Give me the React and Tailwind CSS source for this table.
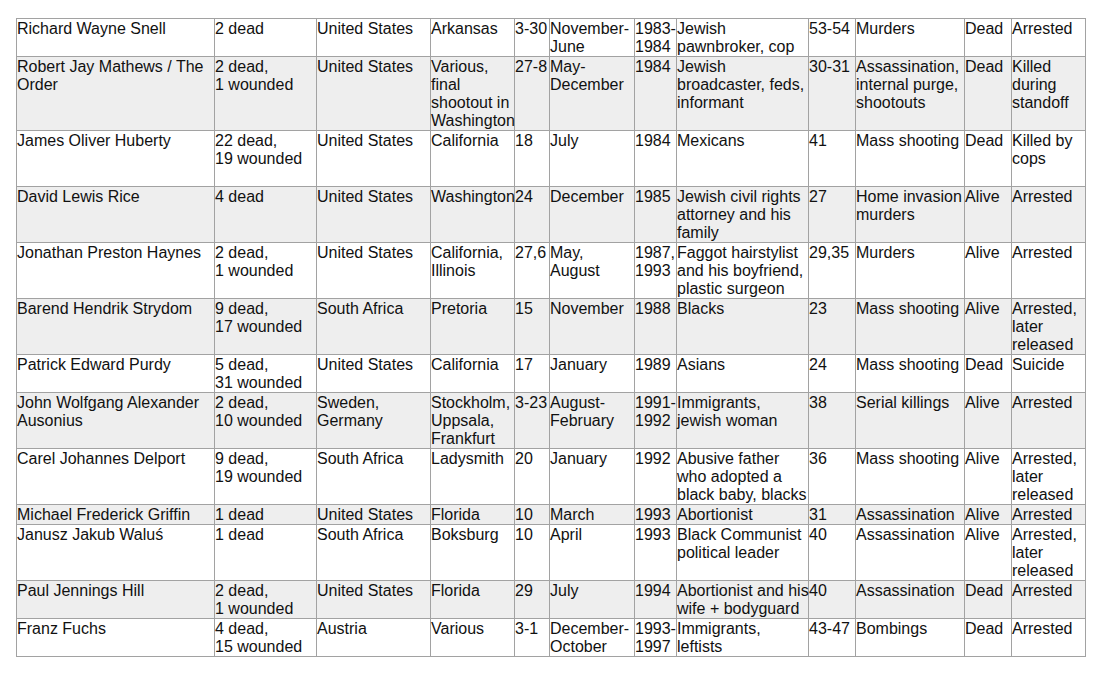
const widths = [198, 102, 114, 84, 35, 85, 42, 132, 47, 109, 47, 74];

const rows = [
  { h: 38, cells: ["Richard Wayne Snell", "2 dead", "United States", "Arkansas", "3-30", "November-|June", "1983-|1984", "Jewish|pawnbroker, cop", "53-54", "Murders", "Dead", "Arrested"] },
  { h: 74, cells: ["Robert Jay Mathews / The|Order", "2 dead,|1 wounded", "United States", "Various,|final|shootout in|Washington", "27-8", "May-|December", "1984", "Jewish|broadcaster, feds,|informant", "30-31", "Assassination,|internal purge,|shootouts", "Dead", "Killed|during|standoff"] },
  { h: 56, cells: ["James Oliver Huberty", "22 dead,|19 wounded", "United States", "California", "18", "July", "1984", "Mexicans", "41", "Mass shooting", "Dead", "Killed by|cops"] },
  { h: 56, cells: ["David Lewis Rice", "4 dead", "United States", "Washington", "24", "December", "1985", "Jewish civil rights|attorney and his|family", "27", "Home invasion|murders", "Alive", "Arrested"] },
  { h: 56, cells: ["Jonathan Preston Haynes", "2 dead,|1 wounded", "United States", "California,|Illinois", "27,6", "May,|August", "1987,|1993", "Faggot hairstylist|and his boyfriend,|plastic surgeon", "29,35", "Murders", "Alive", "Arrested"] },
  { h: 56, cells: ["Barend Hendrik Strydom", "9 dead,|17 wounded", "South Africa", "Pretoria", "15", "November", "1988", "Blacks", "23", "Mass shooting", "Alive", "Arrested,|later|released"] },
  { h: 38, cells: ["Patrick Edward Purdy", "5 dead,|31 wounded", "United States", "California", "17", "January", "1989", "Asians", "24", "Mass shooting", "Dead", "Suicide"] },
  { h: 56, cells: ["John Wolfgang Alexander|Ausonius", "2 dead,|10 wounded", "Sweden,|Germany", "Stockholm,|Uppsala,|Frankfurt", "3-23", "August-|February", "1991-|1992", "Immigrants,|jewish woman", "38", "Serial killings", "Alive", "Arrested"] },
  { h: 56, cells: ["Carel Johannes Delport", "9 dead,|19 wounded", "South Africa", "Ladysmith", "20", "January", "1992", "Abusive father|who adopted a|black baby, blacks", "36", "Mass shooting", "Alive", "Arrested,|later|released"] },
  { h: 20, cells: ["Michael Frederick Griffin", "1 dead", "United States", "Florida", "10", "March", "1993", "Abortionist", "31", "Assassination", "Alive", "Arrested"] },
  { h: 56, cells: ["Janusz Jakub Waluś", "1 dead", "South Africa", "Boksburg", "10", "April", "1993", "Black Communist|political leader", "40", "Assassination", "Alive", "Arrested,|later|released"] },
  { h: 38, cells: ["Paul Jennings Hill", "2 dead,|1 wounded", "United States", "Florida", "29", "July", "1994", "Abortionist and his|wife + bodyguard", "40", "Assassination", "Dead", "Arrested"] },
  { h: 38, cells: ["Franz Fuchs", "4 dead,|15 wounded", "Austria", "Various", "3-1", "December-|October", "1993-|1997", "Immigrants,|leftists", "43-47", "Bombings", "Dead", "Arrested"] },
];

function Cell({ text }) {
  const lines = text.split("|");
  return (
    <td className="border border-[#a2a2a2] pl-0 pr-px pt-px pb-0 align-top whitespace-nowrap overflow-visible">
      {lines.map((l, i) => (
        <div key={i}>{l}</div>
      ))}
    </td>
  );
}

export default function App() {
  return (
    <div className="min-h-screen bg-white pt-[18px] pl-[16px] font-['Liberation_Sans',Arial,sans-serif] text-[16px] leading-[18px] text-[#111]">
      <table className="table-fixed border-collapse border border-[#9a9a9a] w-[1069px]">
        <colgroup>
          {widths.map((w, i) => (
            <col key={i} style={{ width: w }} />
          ))}
        </colgroup>
        <tbody>
          {rows.map((r, i) => (
            <tr key={i} className={i % 2 === 1 ? "bg-[#eeeeee]" : "bg-white"} style={{ height: r.h }}>
              {r.cells.map((c, j) => (
                <Cell key={j} text={c} />
              ))}
            </tr>
          ))}
        </tbody>
      </table>
    </div>
  );
}
